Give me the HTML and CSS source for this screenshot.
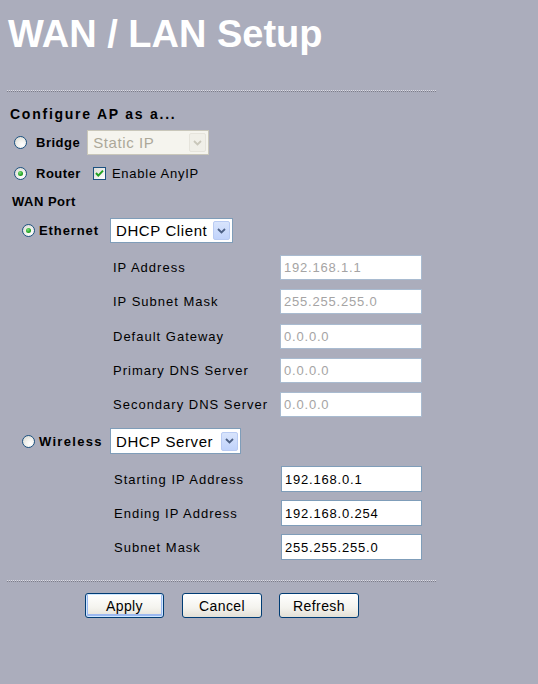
FILE: index.html
```html
<!DOCTYPE html>
<html>
<head>
<meta charset="utf-8">
<title>WAN / LAN Setup</title>
<link rel="stylesheet" href="styles.css">
</head>
<body>
<div class="page">
  <h1 class="title">WAN / LAN Setup</h1>
  <div class="sep sep-top"></div>

  <div class="section-title">Configure AP as a...</div>

  <div class="row row-bridge">
    <span class="radio"></span>
    <span class="opt-label">Bridge</span>
    <div class="select select-disabled select-bridge">
      <span class="select-text">Static IP</span>
      <span class="select-btn"><svg width="9" height="6" viewBox="0 0 9 6"><path d="M1 1 L4.5 4.5 L8 1" fill="none" stroke="#c9c7ba" stroke-width="1.8"/></svg></span>
    </div>
  </div>

  <div class="row row-router">
    <span class="radio checked"></span>
    <span class="opt-label">Router</span>
    <span class="checkbox"><svg width="11" height="11" viewBox="0 0 11 11"><path d="M2 5 L4.3 7.6 L9 2.6" fill="none" stroke="#21a121" stroke-width="2"/></svg></span>
    <span class="check-label">Enable AnyIP</span>
  </div>

  <div class="sub-title">WAN Port</div>

  <div class="row row-port">
    <span class="radio checked"></span>
    <span class="port-label eth">Ethernet</span>
    <div class="select select-eth">
      <span class="select-text">DHCP Client</span>
      <span class="select-btn"><svg width="9" height="6" viewBox="0 0 9 6"><path d="M1 1 L4.5 4.5 L8 1" fill="none" stroke="#4d6185" stroke-width="1.8"/></svg></span>
    </div>
  </div>

  <div class="form form-eth">
    <span class="f-label">IP Address</span><span class="field disabled">192.168.1.1</span>
    <span class="f-label">IP Subnet Mask</span><span class="field disabled">255.255.255.0</span>
    <span class="f-label">Default Gateway</span><span class="field disabled">0.0.0.0</span>
    <span class="f-label">Primary DNS Server</span><span class="field disabled">0.0.0.0</span>
    <span class="f-label">Secondary DNS Server</span><span class="field disabled">0.0.0.0</span>
  </div>

  <div class="row row-wireless">
    <span class="radio"></span>
    <span class="port-label wl">Wireless</span>
    <div class="select select-wl">
      <span class="select-text">DHCP Server</span>
      <span class="select-btn"><svg width="9" height="6" viewBox="0 0 9 6"><path d="M1 1 L4.5 4.5 L8 1" fill="none" stroke="#4d6185" stroke-width="1.8"/></svg></span>
    </div>
  </div>

  <div class="form form-wl">
    <span class="f-label">Starting IP Address</span><span class="field">192.168.0.1</span>
    <span class="f-label">Ending IP Address</span><span class="field">192.168.0.254</span>
    <span class="f-label">Subnet Mask</span><span class="field">255.255.255.0</span>
  </div>

  <div class="sep sep-bottom"></div>

  <div class="buttons">
    <span class="btn btn-default">Apply</span>
    <span class="btn">Cancel</span>
    <span class="btn">Refresh</span>
  </div>
</div>
</body>
</html>
```

FILE: styles.css
```css
html, body {
  margin: 0;
  padding: 0;
  background: #abadbc;
}
body {
  font-family: "Liberation Sans", Arial, Helvetica, sans-serif;
  color: #000;
  width: 538px;
  height: 684px;
  overflow: hidden;
}
.page {
  display: block;
}
.title {
  margin: 0;
  padding: 12px 0 0 8px;
  height: 44px;
  line-height: 44px;
  font-size: 38px;
  font-weight: bold;
  color: #fff;
  letter-spacing: 0;
}
.sep {
  margin-left: 7px;
  width: 429px;
  height: 0;
  border-top: 1px dotted #dcdce4;
  border-bottom: 1px dotted #7c7c88;
}
.sep-top {
  margin-top: 34px;
}
.section-title {
  margin-top: 14px;
  padding-left: 10px;
  font-size: 14px;
  font-weight: bold;
  line-height: 16px;
  letter-spacing: 1.75px;
}
.row {
  display: flex;
  align-items: center;
  height: 25px;
}
.row-bridge {
  margin-top: 8px;
  padding-left: 14px;
}
.row-router {
  margin-top: 6px;
  padding-left: 14px;
}
.radio {
  position: relative;
  box-sizing: border-box;
  width: 13px;
  height: 13px;
  border: 1px solid #1c5180;
  border-radius: 50%;
  background: radial-gradient(circle at 65% 70%, #ffffff 0%, #f2f2ee 40%, #d4d4cc 100%);
  flex: none;
}
.radio.checked::after {
  content: "";
  position: absolute;
  left: 3px;
  top: 3px;
  width: 5px;
  height: 5px;
  border-radius: 50%;
  background: radial-gradient(circle at 40% 35%, #7ee07e 0%, #21a121 60%, #178217 100%);
}
.opt-label {
  margin-left: 9px;
  font-size: 13px;
  font-weight: bold;
  letter-spacing: 0.5px;
}
.port-label {
  box-sizing: border-box;
  width: 75px;
  padding-left: 4px;
  font-size: 13px;
  font-weight: bold;
  flex: none;
}
.port-label.eth {
  letter-spacing: 0.9px;
}
.port-label.wl {
  letter-spacing: 1.3px;
}
.select {
  box-sizing: border-box;
  display: flex;
  align-items: center;
  justify-content: space-between;
  height: 25px;
  border: 1px solid #7f9db9;
  background: #fff;
  padding: 0 2px 0 5px;
  font-size: 15px;
  letter-spacing: 0.6px;
}
.select-btn {
  box-sizing: border-box;
  display: flex;
  align-items: center;
  justify-content: center;
  width: 17px;
  height: 19px;
  border: 1px solid #b9cbf3;
  border-radius: 2px;
  background: linear-gradient(#d8e4fc, #c1d3fb);
}
.select-bridge {
  margin-left: 7px;
  width: 122px;
  height: 25px;
  background: #f5f4ee;
  border-color: #c9c7ba;
  color: #aca899;
}
.select-disabled .select-btn {
  background: #f0efe8;
  border-color: #e6e4dc;
}
.checkbox {
  box-sizing: border-box;
  display: flex;
  align-items: center;
  justify-content: center;
  margin-left: 12px;
  width: 13px;
  height: 13px;
  border: 1px solid #1c5180;
  background: linear-gradient(135deg, #dcdcd7, #ffffff);
  flex: none;
}
.check-label {
  margin-left: 6px;
  font-size: 13px;
  letter-spacing: 0.75px;
}
.sub-title {
  margin-top: 8px;
  padding-left: 12px;
  height: 16px;
  line-height: 16px;
  font-size: 13px;
  font-weight: bold;
  letter-spacing: 0.5px;
}
.row-port {
  margin-top: 8px;
  padding-left: 22px;
}
.select-eth {
  width: 123px;
}
.row-wireless {
  margin-top: 11px;
  height: 26px;
  padding-left: 22px;
}
.select-wl {
  width: 131px;
  height: 26px;
}
.form {
  display: grid;
  grid-template-columns: 167px 142px;
  align-items: center;
  padding-left: 113px;
}
.form-eth {
  margin-top: 12px;
  grid-auto-rows: 25px;
  row-gap: 9.3px;
}
.form-wl {
  margin-top: 12px;
  grid-auto-rows: 26px;
  row-gap: 8px;
  padding-left: 114px;
  grid-template-columns: 167px 141px;
}
.f-label {
  font-size: 13px;
  letter-spacing: 1px;
}
.field {
  box-sizing: border-box;
  display: flex;
  align-items: center;
  height: 100%;
  border: 1px solid #7f9db9;
  background: #fff;
  padding-left: 3px;
  font-size: 13px;
  letter-spacing: 0.8px;
  color: #000;
}
.field.disabled {
  border-color: #a9bbd0;
  color: #a5a4a4;
}
.sep-bottom {
  margin-top: 20px;
}
.buttons {
  display: flex;
  margin-top: 11px;
  padding-left: 85px;
  gap: 17px;
}
.btn {
  box-sizing: border-box;
  display: flex;
  align-items: center;
  justify-content: center;
  width: 80px;
  height: 25px;
  border: 1px solid #003c74;
  border-radius: 3px;
  background: linear-gradient(#ffffff 0%, #f4f3ee 60%, #e3e0d6 100%);
  font-size: 14px;
  letter-spacing: 0.4px;
}
.btn-default {
  width: 79px;
  box-shadow: inset 0 0 0 1px #cee7ff, inset 0 -1px 0 2px #9bb8f0;
}
.btn-default + .btn {
  margin-left: 1px;
}
```
